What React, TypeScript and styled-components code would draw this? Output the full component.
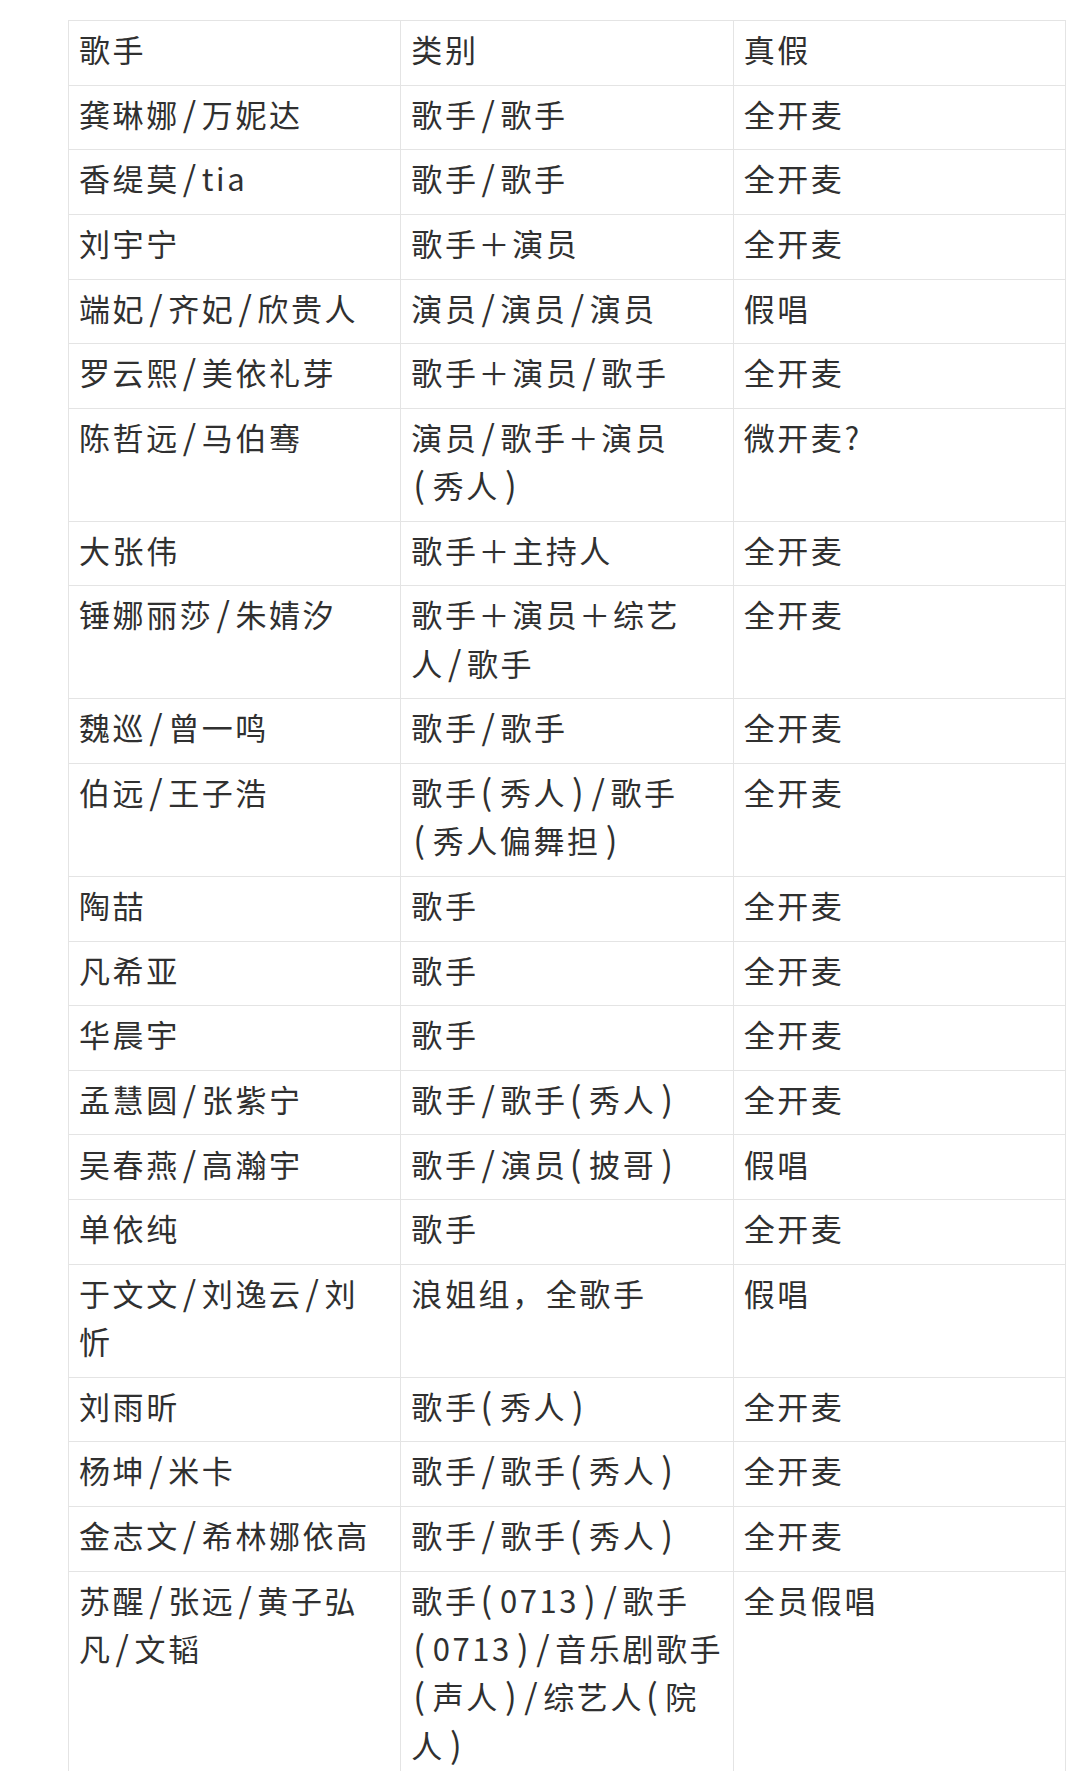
import React from "react";
import styled, { createGlobalStyle } from "styled-components";

const Global = createGlobalStyle`
  html, body { margin: 0; padding: 0; background: #ffffff; }
  body { font-family: "Noto Sans CJK SC", "Noto Sans", sans-serif; }
`;

const Page = styled.div`
  padding: 20px 0 0 68px;
`;

const Table = styled.table`
  width: 998px;
  table-layout: fixed;
  border-collapse: collapse;
  color: #303030;
  font-family: "Noto Sans CJK SC", "Noto Sans", sans-serif;
  font-size: 31px;
  letter-spacing: 2.6px;
  line-height: 48.35px;
`;

const Cell = styled.td`
  border: 1px solid #e4e4e4;
  padding: 4.15px 10px 11.15px;
  vertical-align: top;
  text-align: left;
  font-weight: 400;
  white-space: nowrap;
  overflow: visible;
`;

const HeadCell = styled(Cell).attrs({ as: "th" })``;

const Sep = styled.span`
  font-size: 1.1em;
  line-height: 0;
  margin: 0 3px;
`;

const Paren = styled.span<{ $open: boolean }>`
  font-size: 1.12em;
  line-height: 0;
  margin: ${(p) => (p.$open ? "0 5px 0 2px" : "0 2px 0 5px")};
`;

type Row = [string, string, string];

const rows: Row[] = [
  ["龚琳娜/万妮达", "歌手/歌手", "全开麦"],
  ["香缇莫/tia", "歌手/歌手", "全开麦"],
  ["刘宇宁", "歌手＋演员", "全开麦"],
  ["端妃/齐妃/欣贵人", "演员/演员/演员", "假唱"],
  ["罗云熙/美依礼芽", "歌手＋演员/歌手", "全开麦"],
  ["陈哲远/马伯骞", "演员/歌手＋演员\n(秀人)", "微开麦?"],
  ["大张伟", "歌手＋主持人", "全开麦"],
  ["锤娜丽莎/朱婧汐", "歌手＋演员＋综艺\n人/歌手", "全开麦"],
  ["魏巡/曾一鸣", "歌手/歌手", "全开麦"],
  ["伯远/王子浩", "歌手(秀人)/歌手\n(秀人偏舞担)", "全开麦"],
  ["陶喆", "歌手", "全开麦"],
  ["凡希亚", "歌手", "全开麦"],
  ["华晨宇", "歌手", "全开麦"],
  ["孟慧圆/张紫宁", "歌手/歌手(秀人)", "全开麦"],
  ["吴春燕/高瀚宇", "歌手/演员(披哥)", "假唱"],
  ["单依纯", "歌手", "全开麦"],
  ["于文文/刘逸云/刘\n忻", "浪姐组，全歌手", "假唱"],
  ["刘雨昕", "歌手(秀人)", "全开麦"],
  ["杨坤/米卡", "歌手/歌手(秀人)", "全开麦"],
  ["金志文/希林娜依高", "歌手/歌手(秀人)", "全开麦"],
  [
    "苏醒/张远/黄子弘\n凡/文韬",
    "歌手(0713)/歌手\n(0713)/音乐剧歌手\n(声人)/综艺人(院\n人)",
    "全员假唱",
  ],
];

function Line({ value }: { value: string }) {
  const tokens = value.split(/([/()])/).filter((t) => t !== "");
  return (
    <>
      {tokens.map((t, i) => {
        if (t === "/") return <Sep key={i}>/</Sep>;
        if (t === "(") return <Paren key={i} $open>(</Paren>;
        if (t === ")") return <Paren key={i} $open={false}>)</Paren>;
        return <React.Fragment key={i}>{t}</React.Fragment>;
      })}
    </>
  );
}

function Text({ value }: { value: string }) {
  const lines = value.split("\n");
  return (
    <>
      {lines.map((line, li) => (
        <React.Fragment key={li}>
          {li > 0 && <br />}
          <Line value={line} />
        </React.Fragment>
      ))}
    </>
  );
}

export default function App() {
  return (
    <>
      <Global />
      <Page>
        <Table>
          <thead>
            <tr>
              <HeadCell>歌手</HeadCell>
              <HeadCell>类别</HeadCell>
              <HeadCell>真假</HeadCell>
            </tr>
          </thead>
          <tbody>
            {rows.map((r, i) => (
              <tr key={i}>
                {r.map((c, j) => (
                  <Cell key={j}>
                    <Text value={c} />
                  </Cell>
                ))}
              </tr>
            ))}
          </tbody>
        </Table>
      </Page>
    </>
  );
}
